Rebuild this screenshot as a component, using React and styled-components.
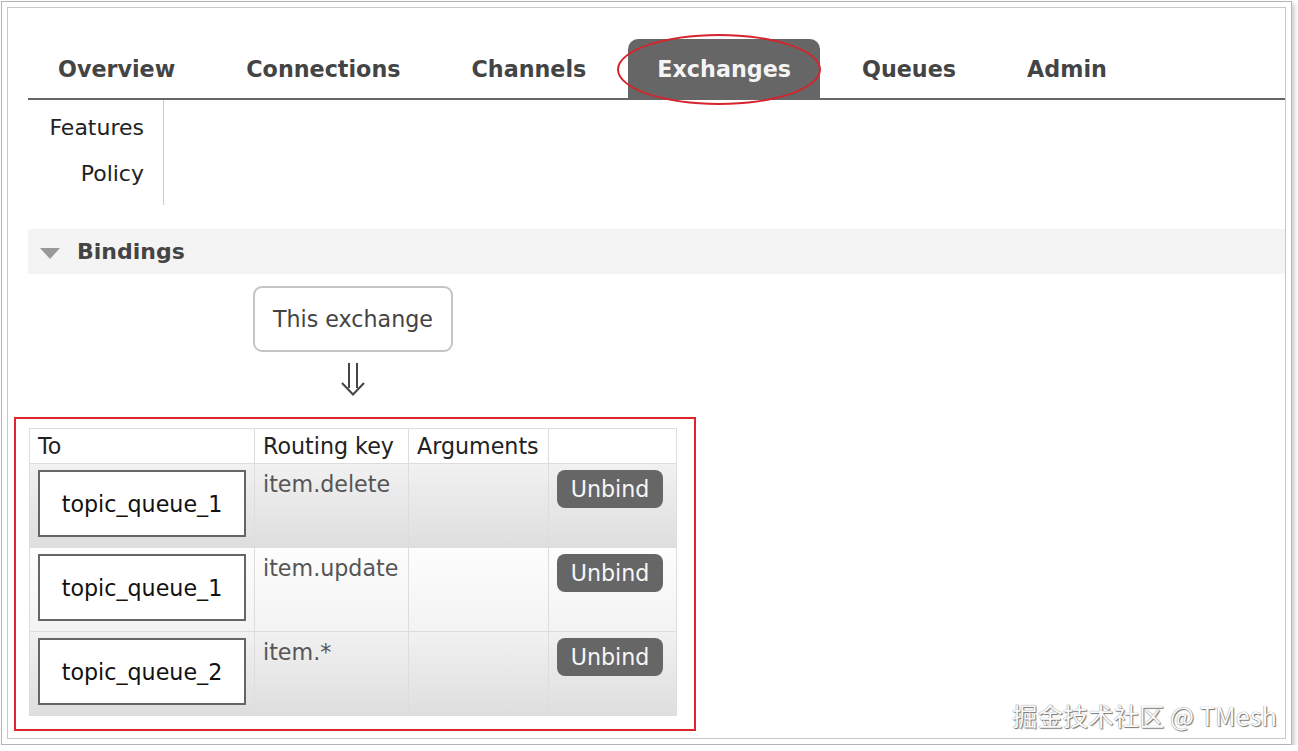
import React from 'react';
import styled, { createGlobalStyle } from 'styled-components';

const GlobalStyle = createGlobalStyle`
  html, body {
    margin: 0;
    padding: 0;
    background: #fff;
  }
  body {
    font-family: "DejaVu Sans", Verdana, sans-serif;
    color: #222;
  }
`;

const Page = styled.div`
  padding: 1px 0 0 1px;
`;

const Frame = styled.div`
  width: 1291px;
  height: 744px;
  box-sizing: border-box;
  border: 1px solid #b4b4b4;
  padding: 5px;
  background: #fff;
  box-shadow: 3px 3px 4px rgba(0, 0, 0, 0.18);
`;

const Inner = styled.div`
  position: relative;
  height: 100%;
  box-sizing: border-box;
  border: 1px solid #c8c8c8;
  padding: 31px 0 0 20px;
`;

const TabBar = styled.ul`
  display: flex;
  margin: 0;
  padding: 0 0 0 1px;
  list-style: none;
  border-bottom: 2px solid #666;
`;

const Tab = styled.li`
  position: relative;
  display: flex;
  align-items: center;
  height: 59px;
  padding: 0 29px;
  margin-right: 13px;
  font-size: 22.25px;
  font-weight: bold;
  color: ${(p) => (p.$active ? '#f4f4f4' : '#444')};
  background: ${(p) => (p.$active ? '#666' : 'transparent')};
  border-radius: 10px 10px 0 0;

  ${(p) =>
    p.$active &&
    `
    &::after {
      content: '';
      position: absolute;
      left: -11px;
      right: -1px;
      top: -5px;
      bottom: -7px;
      border: 2px solid #d5242c;
      border-radius: 50%;
    }
  `}
`;

const SubRow = styled.div`
  display: flex;
`;

const SideMenu = styled.ul`
  width: 136px;
  box-sizing: border-box;
  margin: 0;
  padding: 5px 19px 8px 0;
  list-style: none;
  text-align: right;
  border-right: 1px solid #ccc;
  font-size: 22px;
  line-height: 46px;
  color: #222;
`;

const SectionHeader = styled.div`
  display: flex;
  align-items: center;
  height: 45px;
  margin-top: 24px;
  padding-left: 12px;
  background: #f4f4f4;
  font-size: 22px;
  font-weight: bold;
  color: #444;
`;

const Triangle = styled.span`
  width: 0;
  height: 0;
  margin: 3px 17px 0 0;
  border-left: 10px solid transparent;
  border-right: 10px solid transparent;
  border-top: 11px solid #999;
`;

const Bindings = styled.div`
  display: flex;
  flex-direction: column;
  align-items: center;
  width: fit-content;
  margin-left: 1px;
`;

const ExchangeBox = styled.div`
  display: flex;
  align-items: center;
  height: 66px;
  box-sizing: border-box;
  margin-top: 12px;
  padding: 0 18px;
  border: 2px solid #c4c4c4;
  border-radius: 9px;
  font-size: 22.2px;
  color: #444;
`;

const Arrow = styled.svg`
  display: block;
  margin: 11px 0 32px;
`;

const TableWrap = styled.div`
  position: relative;

  &::after {
    content: '';
    position: absolute;
    left: -15px;
    top: -11px;
    right: -19px;
    bottom: -15px;
    border: 2px solid #e0242c;
    pointer-events: none;
  }
`;

const Table = styled.table`
  border-collapse: collapse;
  border: 1px solid #ddd;
  font-size: 22.2px;
`;

const Th = styled.th`
  width: ${(p) => p.$w}px;
  box-sizing: border-box;
  height: 35px;
  padding: 0 8px;
  text-align: left;
  font-weight: normal;
  color: #222;
  background: #fff;
  border: 1px solid #ddd;
  white-space: nowrap;
`;

const Row = styled.tr`
  background: ${(p) =>
    p.$alt
      ? 'linear-gradient(#fdfdfd, #f3f3f3)'
      : 'linear-gradient(#f1f1f1, #dedede)'};
`;

const Td = styled.td`
  height: 84px;
  box-sizing: border-box;
  padding: 6px 8px;
  vertical-align: top;
  border: 1px solid #ddd;
  line-height: 28px;
  color: #555;
  white-space: nowrap;
`;

const QueueBox = styled.div`
  display: flex;
  align-items: center;
  justify-content: center;
  width: 208px;
  height: 67px;
  box-sizing: border-box;
  border: 2px solid #666;
  background: #fff;
  color: #111;
`;

const UnbindButton = styled.button`
  width: 106px;
  height: 38px;
  padding: 0;
  border: none;
  border-radius: 8px;
  background: #666;
  color: #f6f6f6;
  font-family: inherit;
  font-size: 22.2px;
`;

const Watermark = styled.div`
  position: absolute;
  right: 8px;
  bottom: 8px;
  font-family: "Noto Sans CJK SC", "Noto Sans", sans-serif;
  font-size: 25.4px;
  line-height: 30px;
  color: #fbfbfb;
  text-shadow: 0 0 1px #666, 1px 1px 1px #777;
`;

const tabs = ['Overview', 'Connections', 'Channels', 'Exchanges', 'Queues', 'Admin'];

const bindings = [
  { queue: 'topic_queue_1', key: 'item.delete' },
  { queue: 'topic_queue_1', key: 'item.update' },
  { queue: 'topic_queue_2', key: 'item.*' },
];

const App = () => {
  return (
    <Page>
      <GlobalStyle />
      <Frame>
        <Inner>
          <TabBar>
            {tabs.map((t) => (
              <Tab key={t} $active={t === 'Exchanges'}>{t}</Tab>
            ))}
          </TabBar>

          <SubRow>
            <SideMenu>
              <li>Features</li>
              <li>Policy</li>
            </SideMenu>
          </SubRow>

          <SectionHeader>
            <Triangle />
            Bindings
          </SectionHeader>

          <Bindings>
            <ExchangeBox>This exchange</ExchangeBox>
            <Arrow width="24" height="33" viewBox="0 0 24 33">
              <path d="M8 0 V25 M16 0 V25" stroke="#444" strokeWidth="2" fill="none" />
              <path d="M1 20 L12 31.5 L23 20" stroke="#444" strokeWidth="2" fill="none" />
            </Arrow>
            <TableWrap>
              <Table>
                <thead>
                  <tr>
                    <Th $w={223}>To</Th>
                    <Th $w={154}>Routing key</Th>
                    <Th $w={140}>Arguments</Th>
                    <Th $w={128}></Th>
                  </tr>
                </thead>
                <tbody>
                  {bindings.map((b, i) => (
                    <Row key={i} $alt={i % 2 === 1}>
                      <Td>
                        <QueueBox>{b.queue}</QueueBox>
                      </Td>
                      <Td>{b.key}</Td>
                      <Td></Td>
                      <Td>
                        <UnbindButton>Unbind</UnbindButton>
                      </Td>
                    </Row>
                  ))}
                </tbody>
              </Table>
            </TableWrap>
          </Bindings>

          <Watermark>掘金技术社区 @ TMesh</Watermark>
        </Inner>
      </Frame>
    </Page>
  );
};

export default App;
